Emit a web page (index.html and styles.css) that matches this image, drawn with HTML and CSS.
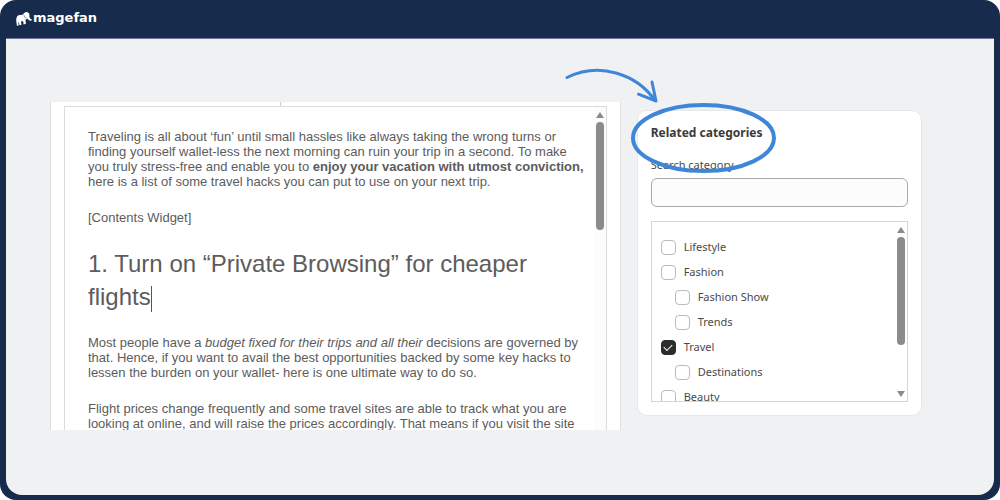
FILE: index.html
```html
<!DOCTYPE html>
<html lang="en">
<head>
<meta charset="utf-8">
<title>Magefan – Related categories</title>
<link rel="stylesheet" href="styles.css">
</head>
<body>
<div class="frame">
  <header class="topbar">
    <a class="brand" href="#">
      <svg class="brand-mark" viewBox="0 0 16 14" aria-hidden="true">
        <path fill="#fff" d="M.2 8.400C.2 6 .8 4.200 2.600 3.300 4 2.600 5.600 3 7.200 2.400 8 .8 9.600-.2 11.400.2 13.200.6 13.600 2.200 13.400 3.900 13.300 5.600 13.800 7.200 16 7.500L15.600 8.500C13.600 9 12.200 8 11.400 6.600L9.600 7.600 9.900 11.700 7.700 12.400 7 9 5 9.600 5.500 12.700 3.500 13.300 2.900 10.300 2.300 10.600 2.700 13.400.9 13.800Z"/>
        <path fill="none" stroke="#172b4d" stroke-width=".5" d="M8 3C8 5 9 6 10.400 5.400"/>
      </svg>
      <span class="brand-name">magefan</span>
    </a>
  </header>
  <main class="stage">
    <section class="editor" aria-label="Post content">
      <div class="toolbar-edge"><span></span><span></span></div>
      <div class="editor-body">
        <article class="post">
          <p>Traveling is all about ‘fun’ until small hassles like always taking the wrong turns or<br>finding yourself wallet-less the next morning can ruin your trip in a second. To make<br>you truly stress-free and enable you to <strong>enjoy your vacation with utmost conviction,</strong><br>here is a list of some travel hacks you can put to use on your next trip.</p>
          <p>[Contents Widget]</p>
          <h1>1. Turn on “Private Browsing” for cheaper<br>flights<span class="caret"></span></h1>
          <p>Most people have a <em>budget fixed for their trips and all their</em> decisions are governed by<br>that. Hence, if you want to avail the best opportunities backed by some key hacks to<br>lessen the burden on your wallet- here is one ultimate way to do so.</p>
          <p>Flight prices change frequently and some travel sites are able to track what you are<br>looking at online, and will raise the prices accordingly. That means if you visit the site</p>
        </article>
        <div class="scrollbar"><i class="up"></i><i class="thumb"></i></div>
      </div>
    </section>
    <aside class="card">
      <h2>Related categories</h2>
      <label class="search-label" for="search">Search category</label>
      <input class="search" id="search" type="text">
      <div class="tree">
        <ul class="options">
          <li><label><input type="checkbox">Lifestyle</label></li>
          <li><label><input type="checkbox">Fashion</label></li>
          <li class="child"><label><input type="checkbox">Fashion Show</label></li>
          <li class="child"><label><input type="checkbox">Trends</label></li>
          <li><label><input type="checkbox" checked>Travel</label></li>
          <li class="child"><label><input type="checkbox">Destinations</label></li>
          <li><label><input type="checkbox">Beauty</label></li>
        </ul>
        <div class="scrollbar"><i class="up"></i><i class="thumb"></i><i class="down"></i></div>
      </div>
      <svg class="callout" viewBox="0 0 220 120" aria-hidden="true">
        <g fill="none" stroke="#3f86d8" stroke-linecap="round" stroke-linejoin="round">
          <ellipse cx="143.500" cy="78" rx="70.500" ry="33" stroke-width="4"/>
          <path stroke-width="3" d="M7 17.500C39 2 76 13 95.500 41M92 22 96 41 78.500 34.200"/>
        </g>
      </svg>
    </aside>
  </main>
</div>
</body>
</html>
```
FILE: styles.css
```css
* { box-sizing: border-box; }
body { margin: 0; background: #fff; color: #5c5c5c; font-family: "Liberation Sans", Arial, sans-serif; }
.frame { min-height: 100vh; display: flex; flex-direction: column; padding: 0 6px 5px; background: #172b4d; border-radius: 16px; }
.topbar { height: 38px; display: flex; align-items: center; padding: 0 10px; }
.brand { display: flex; align-items: center; gap: 1px; color: #fff; text-decoration: none; }
.brand-mark { width: 16px; height: 14px; }
.brand-name { font-family: "DejaVu Sans", sans-serif; font-size: 13px; line-height: 18px; font-weight: 700; padding-bottom: 2px; }
.stage { flex: 1; display: grid; grid-template-columns: minmax(0, 2fr) minmax(0, 1fr); align-items: start; gap: 16px; padding: 63px 72px 64px 44px; background: #f0f1f3; border-top: 1px solid #6f7890; border-radius: 0 0 16px 16px; }

.editor { height: 328px; display: flex; flex-direction: column; overflow: hidden; padding: 0 13px; background: #fff; border: solid #dedfe0; border-width: 0 1px; }
.toolbar-edge { height: 5px; flex: none; display: grid; grid-template-columns: 216px 1fr; border-bottom: 1px solid #dcdcdc; }
.toolbar-edge span + span { border-left: 1px solid #ccc; }
.editor-body { flex: 1; min-height: 0; display: flex; border: solid #dcdcdc; border-width: 0 1px; }
.post { flex: 1; padding: 22px 0 0 23px; white-space: nowrap; }
.post p { margin: 0 0 21px; font-size: 13px; line-height: 15px; }
.post h1 { margin: 0 0 22px; padding-top: 1px; font-size: 24px; line-height: 33px; font-weight: 400; }
.caret { display: inline-block; height: 26px; border-left: 1px solid #555; vertical-align: middle; }

.scrollbar { flex: none; width: 12px; display: flex; flex-direction: column; align-items: center; gap: 4px; padding: 5px 0 4px; background: #fcfcfc; }
.scrollbar .up, .scrollbar .down { border: 4px solid transparent; }
.scrollbar .up { border-top: 0; border-bottom: 6px solid #8b8b8b; }
.scrollbar .down { margin-top: auto; border-bottom: 0; border-top: 6px solid #8b8b8b; }
.scrollbar .thumb { width: 8px; height: 108px; border-radius: 4px; background: #8b8b8b; }

.card { position: relative; display: flex; flex-direction: column; margin-top: 8px; padding: 14px 13px 13px; background: #fff; border: 1px solid #e6e7e8; border-radius: 10px; color: #4a4a4a; font-family: "Noto Sans", sans-serif; }
.card h2 { margin: 0 0 16px; font-size: 12px; line-height: 16px; color: #3a3a3a; }
.search-label { font-size: 11px; line-height: 16px; }
.search { height: 29px; margin: 5px 0 14px; padding: 0 8px; background: #fcfcfc; border: 1px solid #aaa; border-radius: 6px; font: inherit; font-size: 12px; }
.tree { height: 181px; display: flex; overflow: hidden; border: 1px solid #d6d6d6; }
.tree .scrollbar { background: #fff; }
.options { flex: 1; margin: 0; padding: 17px 0 0 9px; list-style: none; display: flex; flex-direction: column; gap: 9px; }
.options .child { padding-left: 14px; }
.options label { display: flex; align-items: center; gap: 8px; font-size: 11px; line-height: 16px; }
.options input { appearance: none; width: 15px; height: 15px; margin: 0; border: 1px solid #bbb; border-radius: 4px; background: #fff; }
.options input:checked { border-color: #2d2d2d; background: #2d2d2d; display: grid; place-items: center; }
.options input:checked::before { content: ""; width: 7px; height: 4px; margin-bottom: 2px; border: solid #fff; border-width: 0 0 1px 1px; transform: rotate(-45deg); }
.callout { position: absolute; left: -78px; top: -51px; width: 220px; height: 120px; pointer-events: none; }
```
